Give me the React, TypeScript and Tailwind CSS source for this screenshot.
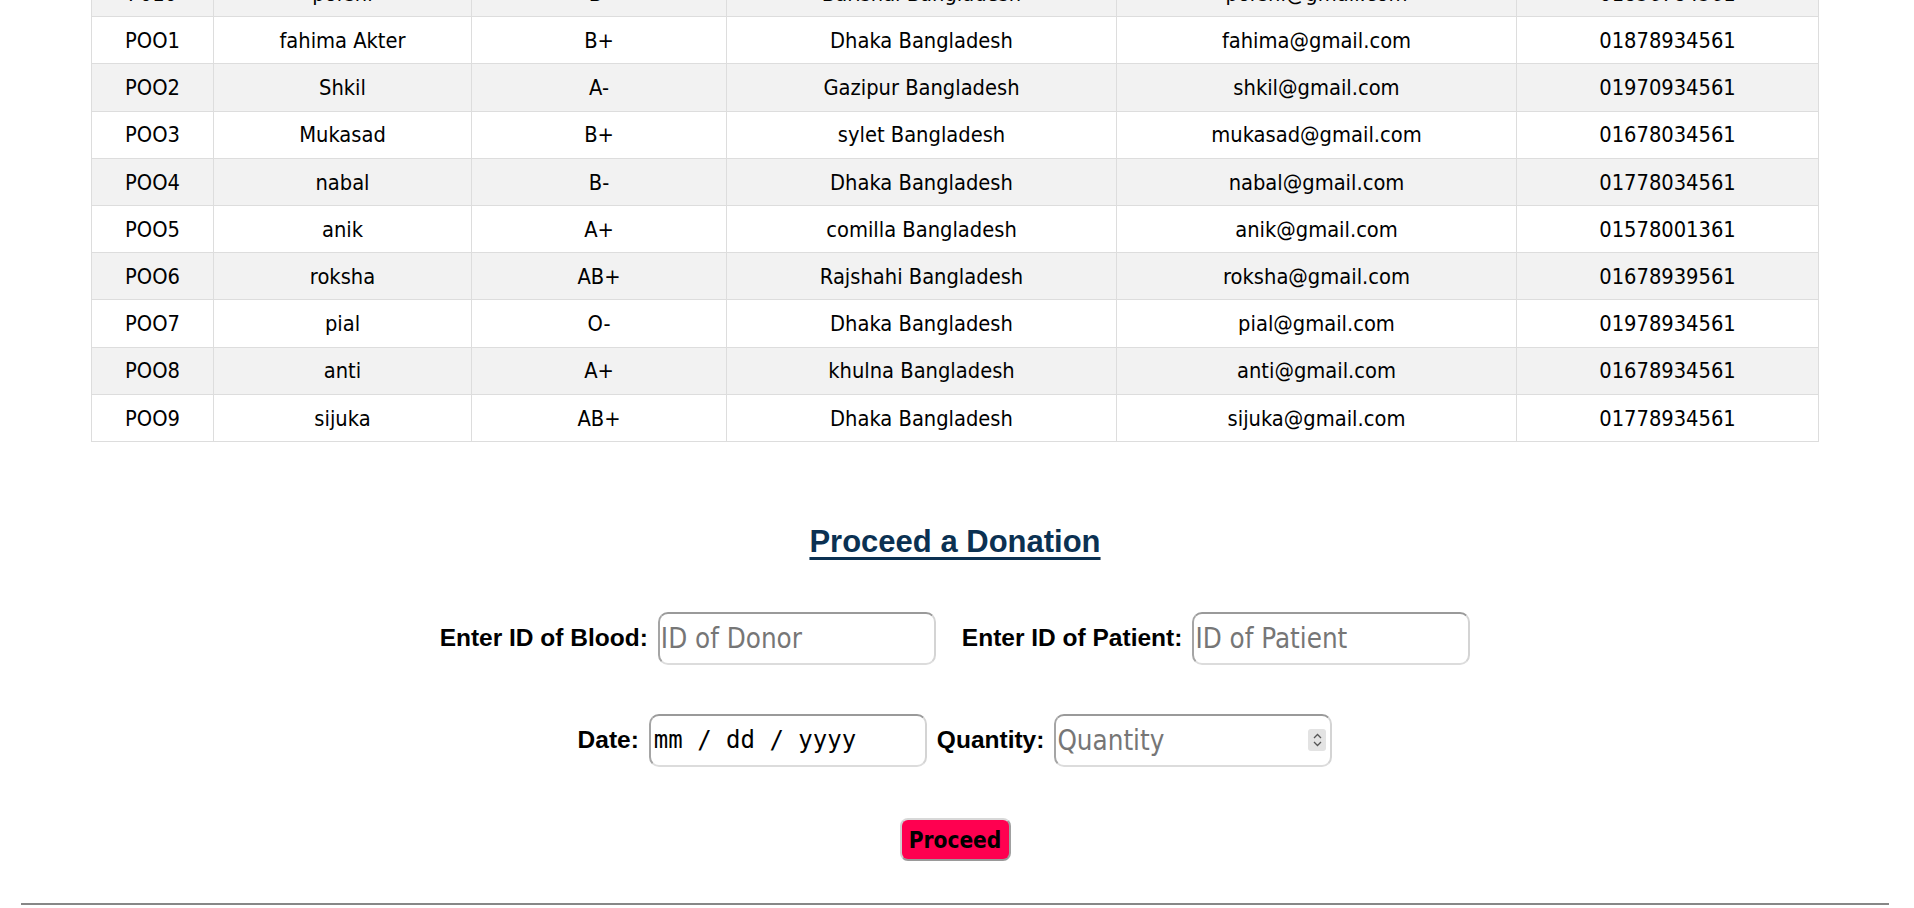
import React from "react";

const donors = [
  ["P010", "porshi", "B-", "Barishal Bangladesh", "porshi@gmail.com", "01856784561"],
  ["POO1", "fahima Akter", "B+", "Dhaka Bangladesh", "fahima@gmail.com", "01878934561"],
  ["POO2", "Shkil", "A-", "Gazipur Bangladesh", "shkil@gmail.com", "01970934561"],
  ["POO3", "Mukasad", "B+", "sylet Bangladesh", "mukasad@gmail.com", "01678034561"],
  ["POO4", "nabal", "B-", "Dhaka Bangladesh", "nabal@gmail.com", "01778034561"],
  ["POO5", "anik", "A+", "comilla Bangladesh", "anik@gmail.com", "01578001361"],
  ["POO6", "roksha", "AB+", "Rajshahi Bangladesh", "roksha@gmail.com", "01678939561"],
  ["POO7", "pial", "O-", "Dhaka Bangladesh", "pial@gmail.com", "01978934561"],
  ["POO8", "anti", "A+", "khulna Bangladesh", "anti@gmail.com", "01678934561"],
  ["POO9", "sijuka", "AB+", "Dhaka Bangladesh", "sijuka@gmail.com", "01778934561"],
];

const inputBox =
  "h-[53px] w-[278px] rounded-[10px] border-2 border-t-[#9a9a9a] border-l-[#a5a5a5] border-b-[#dcdcdc] border-r-[#d4d4d4] bg-white outline-none";

const label = "font-['Liberation_Sans',Arial,sans-serif] text-[24.5px] font-bold text-black";

const placeholderFont =
  "font-['DejaVu_Sans_Condensed','DejaVu_Sans',sans-serif] text-[27.5px] placeholder:text-[#767676]";

export default function App() {
  return (
    <div className="w-[1910px] bg-white text-black">
      <table className="mx-auto -mt-[31px] w-[1727px] table-fixed border-collapse font-['DejaVu_Sans_Condensed','DejaVu_Sans',sans-serif] text-[21.7px]">
        <colgroup>
          <col className="w-[122px]" />
          <col className="w-[258px]" />
          <col className="w-[255px]" />
          <col className="w-[390px]" />
          <col className="w-[400px]" />
          <col className="w-[302px]" />
        </colgroup>
        <tbody>
          {donors.map((row, i) => (
            <tr key={row[0]} className={i % 2 === 0 ? "bg-[#f2f2f2]" : "bg-white"}>
              {row.map((cell, j) => (
                <td key={j} className="h-[47.2px] border border-[#dddddd] p-0 pt-[2px] text-center align-middle">
                  {cell}
                </td>
              ))}
            </tr>
          ))}
        </tbody>
      </table>

      <h2 className="mt-[82px] text-center font-['Liberation_Sans',Arial,sans-serif] text-[31px] leading-[36px] font-bold text-[#0b3152] underline decoration-[2.5px] underline-offset-[5px]">
        Proceed a Donation
      </h2>

      <div className="mt-[52px] flex items-center justify-center">
        <label className={label}>Enter ID of Blood:</label>
        <input placeholder="ID of Donor" className={`${inputBox} ml-[10px] px-px ${placeholderFont}`} />
        <label className={`${label} ml-[26px]`}>Enter ID of Patient:</label>
        <input placeholder="ID of Patient" className={`${inputBox} ml-[10px] px-px ${placeholderFont}`} />
      </div>

      <div className="mt-[49px] flex items-center justify-center">
        <label className={label}>Date:</label>
        <input
          placeholder="mm / dd / yyyy"
          className={`${inputBox} ml-[10px] px-[3px] font-['DejaVu_Sans_Mono',monospace] text-[24px] placeholder:text-black`}
        />
        <label className={`${label} ml-[10px]`}>Quantity:</label>
        <div className={`${inputBox} ml-[10px] flex items-center pr-[4px]`}>
          <input
            placeholder="Quantity"
            className={`h-full min-w-0 flex-1 bg-transparent px-px outline-none ${placeholderFont}`}
          />
          <div className="flex h-[22px] w-[18px] flex-col items-center justify-center rounded-[3px] bg-[#e3e3e3]">
            <svg width="9" height="6" viewBox="0 0 9 6" className="mb-[2px]">
              <path d="M1 5 L4.5 1.5 L8 5" fill="none" stroke="#555" strokeWidth="1.3" />
            </svg>
            <svg width="9" height="6" viewBox="0 0 9 6">
              <path d="M1 1 L4.5 4.5 L8 1" fill="none" stroke="#555" strokeWidth="1.3" />
            </svg>
          </div>
        </div>
      </div>

      <div className="mt-[51px] flex justify-center">
        <button className="h-[43px] w-[111px] rounded-[8px] border-2 border-t-[#d8d8d8] border-l-[#d0d0d0] border-b-[#9a9a9a] border-r-[#a0a0a0] bg-[#ff0050] pt-[2px] font-['DejaVu_Sans_Condensed','DejaVu_Sans',sans-serif] text-[22.5px] font-bold text-black">
          Proceed
        </button>
      </div>

      <div className="mx-[21px] mt-[42px] h-[2px] bg-[#878787]" />
      <div className="h-[20px]" />
    </div>
  );
}
